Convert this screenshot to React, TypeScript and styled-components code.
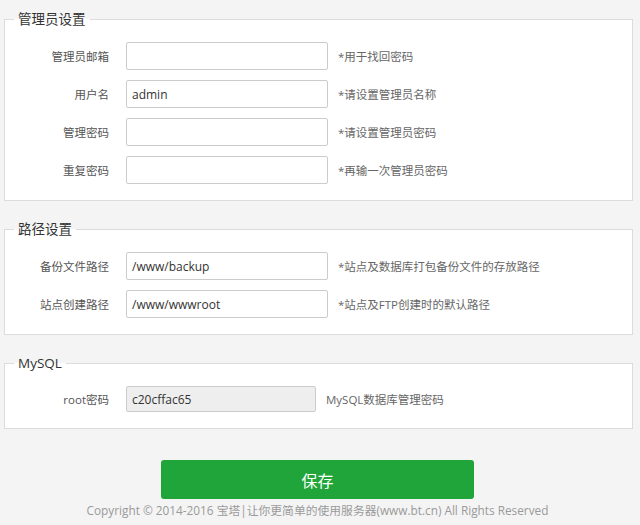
import React from 'react';
import styled, { createGlobalStyle } from 'styled-components';

const Global = createGlobalStyle`
  html, body { margin: 0; padding: 0; background: #f4f4f4; }
  body { font-family: "Open Sans", "Noto Sans CJK SC", sans-serif; }
`;

const Page = styled.div`
  padding: 9px 7px 0 4px;
  display: flex;
  flex-direction: column;
  gap: 18px;
`;

const Fieldset = styled.fieldset`
  margin: 0;
  min-width: 0;
  border: 1px solid #dcdcdc;
  background: #fff;
  padding: 13px 0 16px 0;
`;

const Legend = styled.legend`
  margin-left: 9px;
  padding: 0 4px;
  font-size: 13.5px;
  line-height: 20px;
  color: #333;
`;

const Rows = styled.div`
  display: flex;
  flex-direction: column;
  gap: 10px;
`;

const Row = styled.div<{ $h?: number }>`
  display: flex;
  align-items: center;
  height: ${p => p.$h ?? 28}px;
`;

const Label = styled.label`
  width: 104px;
  flex-shrink: 0;
  margin-right: 17px;
  text-align: right;
  font-size: 11.5px;
  color: #555;
`;

const Input = styled.input<{ $w?: number; $h?: number }>`
  box-sizing: border-box;
  width: ${p => p.$w ?? 202}px;
  height: ${p => p.$h ?? 28}px;
  border: 1px solid #ccc;
  border-radius: 2px;
  padding: 0 5px;
  font-family: inherit;
  font-size: 12px;
  color: #333;
  background: ${p => (p.readOnly ? '#eee' : '#fff')};
  outline: none;
`;

const Hint = styled.span`
  margin-left: 10px;
  font-size: 11.5px;
  color: #666;
`;

const Actions = styled.div`
  margin-top: 31px;
  padding: 0 9px 0 4px;
  display: flex;
  flex-direction: column;
  align-items: center;
`;

const SaveButton = styled.button`
  width: 313px;
  height: 39px;
  border: none;
  border-radius: 3px;
  background: #20a53a;
  color: #fff;
  font-family: inherit;
  font-size: 16px;
  cursor: pointer;
`;

const Copyright = styled.div`
  margin-top: 1px;
  font-size: 11.8px;
  line-height: 20px;
  color: #9a9a9a;
  white-space: nowrap;
`;

type Field = { label: string; value?: string; hint: string };

const admin: Field[] = [
  { label: '管理员邮箱', hint: '*用于找回密码' },
  { label: '用户名', value: 'admin', hint: '*请设置管理员名称' },
  { label: '管理密码', hint: '*请设置管理员密码' },
  { label: '重复密码', hint: '*再输一次管理员密码' },
];

const paths: Field[] = [
  { label: '备份文件路径', value: '/www/backup', hint: '*站点及数据库打包备份文件的存放路径' },
  { label: '站点创建路径', value: '/www/wwwroot', hint: '*站点及FTP创建时的默认路径' },
];

const FieldRows = ({ fields }: { fields: Field[] }) => (
  <Rows>
    {fields.map(f => (
      <Row key={f.label}>
        <Label>{f.label}</Label>
        <Input defaultValue={f.value ?? ''} />
        <Hint>{f.hint}</Hint>
      </Row>
    ))}
  </Rows>
);

export default function App() {
  return (
    <>
      <Global />
      <Page>
        <Fieldset>
          <Legend>管理员设置</Legend>
          <FieldRows fields={admin} />
        </Fieldset>
        <Fieldset>
          <Legend>路径设置</Legend>
          <FieldRows fields={paths} />
        </Fieldset>
        <Fieldset>
          <Legend>MySQL</Legend>
          <Rows>
            <Row $h={26}>
              <Label>root密码</Label>
              <Input $w={190} $h={26} readOnly defaultValue="c20cffac65" />
              <Hint>MySQL数据库管理密码</Hint>
            </Row>
          </Rows>
        </Fieldset>
      </Page>
      <Actions>
        <SaveButton>保存</SaveButton>
        <Copyright>Copyright © 2014-2016 宝塔|让你更简单的使用服务器(www.bt.cn) All Rights Reserved</Copyright>
      </Actions>
    </>
  );
}
